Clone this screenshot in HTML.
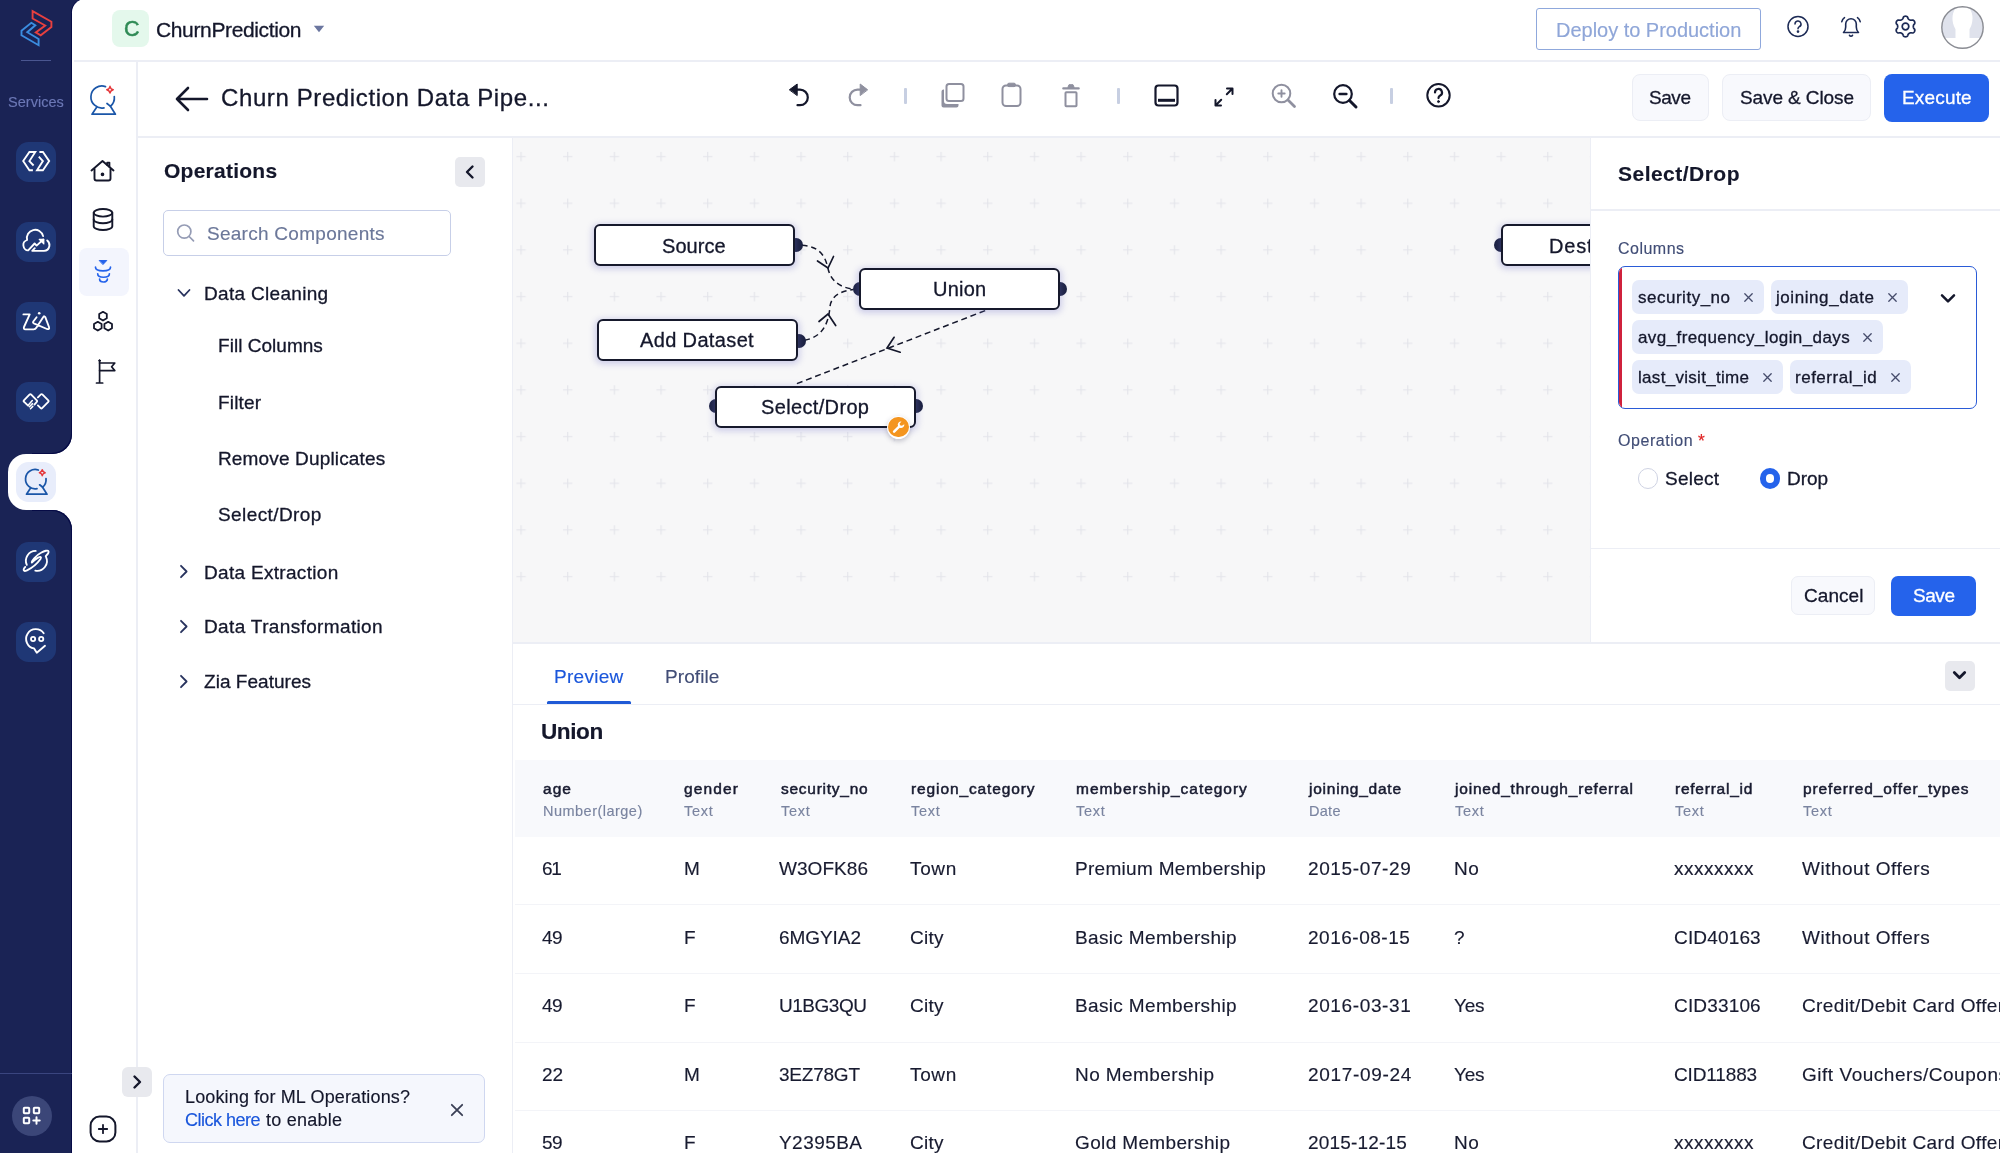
<!DOCTYPE html>
<html lang="en">
<head>
<meta charset="utf-8">
<title>Churn Prediction Data Pipeline</title>
<style>
*{box-sizing:border-box;margin:0;padding:0}
html,body{width:2000px;height:1153px;overflow:hidden;background:#fff}
body{font-family:"Liberation Sans",sans-serif;color:#14172b;position:relative}
#root{position:absolute;left:0;top:0;width:2000px;height:1153px;overflow:hidden}
.abs{position:absolute}
.t{position:absolute;white-space:pre;line-height:1;will-change:transform;-webkit-text-stroke:.15px currentColor}
.m{-webkit-text-stroke:.3px currentColor}
.sb{-webkit-text-stroke:.5px currentColor}
svg{position:absolute;overflow:visible}
#dark{left:0;top:0;width:90px;height:1153px;background:#1a2355}
#main{left:72px;top:-1.300px;width:1928px;height:1155px;background:#fff;border-top-left-radius:13.300px;box-shadow:-1px 0 0 #060b46}
.svc{position:absolute;left:16px;width:40px;height:40px;border-radius:12.5px;background:#1f3775}
.ln{position:absolute;background:#eceef5}
.btn{position:absolute;border-radius:8px;border:1px solid #eceef5;background:#f8f9fd}
.node{position:absolute;height:41.500px;border:2px solid #16192c;border-radius:6px;background:#fff;box-shadow:0 1.5px 6px 1.5px rgba(110,110,200,.3)}
.port{position:absolute;width:14px;height:14px;background:#1b2140;border-radius:7px}
.chip{position:absolute;height:34px;border-radius:7px;background:#e6ebfa}
.sq{position:absolute;width:30px;height:30px;border-radius:5px;background:#e8e9ee}
</style>
</head>
<body>
<div id="root">
<div id="dark" class="abs"></div>
<div id="main" class="abs"></div>

<!-- dark sidebar -->
<svg style="left:0;top:0" width="72" height="60" viewBox="0 0 72 60" fill="none" stroke-width="1.900" stroke-linejoin="miter">
 <path d="M32.600 11.200L51.400 21.700V27L40.700 35.300L35.800 32.400L45.200 25.500L32.600 18.500Z" stroke="#e8403f"/>
 <path d="M31.300 22.800L35.300 25.300L27.300 32.200L38.600 39V45.200L21.500 35.300V30.800Z" stroke="#3b8de0"/>
</svg>
<div class="abs" style="left:21px;top:60px;width:30px;height:1px;background:#4a5690"></div>
<div class="t" style="left:8.0px;top:94.7px;font-size:14.5px;letter-spacing:0.03px;color:#6c78b6;">Services</div>

<div class="abs" style="left:8px;top:454px;width:80px;height:56px;background:#fff;border-radius:18px 0 0 18px"></div>
<div class="abs" style="left:52px;top:434px;width:20px;height:20px;background:#fff"></div>
<div class="abs" style="left:32px;top:413.700px;width:40px;height:40px;background:#1a2355;border-radius:0 0 19.500px 0;box-shadow:inset -1px -1px 0 #060b46"></div>
<div class="abs" style="left:52px;top:510px;width:20px;height:20px;background:#fff"></div>
<div class="abs" style="left:32px;top:510px;width:40px;height:40px;background:#1a2355;border-radius:0 19.500px 0 0;box-shadow:inset -1px 1px 0 #060b46"></div>
<div class="svc" style="top:142px"><svg width="40" height="40" viewBox="0 0 40 40" fill="none" stroke="#fff" stroke-width="1.850" stroke-linejoin="miter">
 <path d="M16.900 28.200H13.400L7.200 19.100L13.400 10H19.300L13.400 19.100L17.600 23.500"/><path d="M22.800 14.700L26.900 19.100L21 28.200H26.900L33.200 19.100L26.900 10H23.400"/></svg></div>
<div class="svc" style="top:222px"><svg width="40" height="40" viewBox="0 0 40 40" fill="none" stroke="#fff" stroke-width="1.850" stroke-linecap="round" stroke-linejoin="round">
 <path d="M27.100 14.100A8.200 8.200 0 0 0 11.100 18C8.500 19 7 21 7.400 23.600C7.800 26.500 9.800 28.600 12.200 28.400L18.600 21.500L20.600 23.600L27.300 17.500"/>
 <path d="M23.200 17.300H27.800V21.900z" fill="#fff" stroke-width="1.200"/>
 <path d="M31.200 18.400C33 19.800 33.800 21.800 33.400 24C32.800 27 30.500 28.800 28 28.800H16.200L18.800 26.200"/></svg></div>
<div class="svc" style="top:302px"><svg width="40" height="40" viewBox="0 0 40 40" fill="none" stroke="#fff" stroke-width="1.850" stroke-linecap="round" stroke-linejoin="round">
 <path d="M7.400 12.400H13.700L8.200 24.500Q7 27.300 9.500 27.300H17.600Q19.500 27.300 20.500 25.500L27.300 15Q28.500 13.500 29.300 15.200L33 25Q33.800 27.800 31 27L17.800 21.300Q16.500 20.600 17.300 19.500L20.600 15.200"/><circle cx="23.200" cy="11.300" r="1.300" fill="#fff" stroke="none"/></svg></div>
<div class="svc" style="top:382px"><svg width="40" height="40" viewBox="0 0 40 40" fill="none" stroke="#fff" stroke-width="1.850" stroke-linecap="round" stroke-linejoin="round">
 <path d="M12.100 23.700L7.900 19.700Q7.200 19.100 7.900 18.400L13.700 12.400Q14.300 11.700 15 12.400L20.800 18.400Q21.500 19.100 20.800 19.800L18.400 22.600"/>
 <path d="M16.300 18.600L12.600 22.700M16.500 21.600L13.400 24.700M16.800 24.400L14.500 26.700" stroke-width="1.500"/>
 <path d="M21.900 15.300L24.900 12.400Q25.600 11.700 26.300 12.400L32.300 18.400Q33 19.100 32.300 19.800L26.100 26.200Q25.400 26.900 24.700 26.200L21.900 23.400"/></svg></div>
<div class="svc" style="top:462px;background:#e8edfb"><svg width="40" height="40" viewBox="0 0 32 36" fill="none" stroke-linecap="round" stroke-linejoin="round" style="left:6.500px;top:4px;width:28px;height:31.500px">
 <path d="M17.500 4.600A11 11 0 1 0 16 25.800" stroke="#1a56a8" stroke-width="2"/>
 <path d="M26.300 14.500c.4 4-1.300 7.600-3.800 9.700M19 21.500l3.600 2.800" stroke="#1a56a8" stroke-width="2"/>
 <path d="M8.500 25.500L4 32.200h23.400l-5-8" stroke="#1a56a8" stroke-width="2"/>
 <path d="M22 4.300c.4 2 1.300 3 3.300 3.400-2 .4-2.900 1.300-3.300 3.400-.4-2.100-1.300-3-3.300-3.400 2-.4 2.900-1.400 3.300-3.400z" stroke="#e5383b" stroke-width="1.700"/></svg></div>
<div class="svc" style="top:542px"><svg width="40" height="40" viewBox="0 0 40 40" fill="none" stroke="#fff" stroke-width="1.850" stroke-linecap="round" stroke-linejoin="round">
 <path d="M19.700 8.900A9.800 9.800 0 0 0 10.800 22.800"/><path d="M30 14.800A9.800 9.800 0 0 1 19.300 28.600"/>
 <path d="M9.300 24.900C6.500 28 7.500 30 11 28.300C16 26 22 20.500 24.500 17C25.800 15 24.300 14.200 22.500 15.400C19.500 17.300 17 19.300 15.800 20.600C15.500 19 20 13.500 25 10.800C28.500 8.800 32 7.800 32.500 9.300C33 10.800 31.500 12.500 29.700 14.100"/>
</svg></div>
<div class="svc" style="top:622px"><svg width="40" height="40" viewBox="0 0 40 40" fill="none" stroke="#fff" stroke-width="1.850" stroke-linecap="round" stroke-linejoin="round">
 <path d="M27.700 11.200A9.700 9.700 0 1 0 18.100 26.400L20.800 30.800L29 23.800"/><circle cx="17.100" cy="17" r="2.100"/><circle cx="25.200" cy="17" r="2.100"/></svg></div>
<div class="abs" style="left:0;top:1073px;width:72px;height:1px;background:#3a457f"></div>
<div class="abs" style="left:12px;top:1096px;width:40px;height:40px;border-radius:20px;background:#3b4678"></div>
<svg style="left:22px;top:1106px" width="20" height="20" viewBox="0 0 20 20" fill="none" stroke="#fff" stroke-width="2" stroke-linejoin="round" stroke-linecap="round">
 <rect x="1.800" y="1.800" width="5.400" height="5.400" rx=".8"/><rect x="11.800" y="1.800" width="5.400" height="5.400" rx=".8"/><rect x="1.800" y="11.800" width="5.400" height="5.400" rx=".8"/><path d="M14.500 11.300v6.400M11.300 14.500h6.400"/></svg>

<!-- structural lines -->
<div class="ln" style="left:74px;top:60px;width:1926px;height:1.5px"></div>
<div class="ln" style="left:136px;top:61px;width:1.5px;height:1092px"></div>
<div class="ln" style="left:137px;top:136px;width:1863px;height:1.5px"></div>
<div class="ln" style="left:511.5px;top:137px;width:1.5px;height:1016px"></div>

<!-- top bar -->
<div class="abs" style="left:112px;top:10px;width:37px;height:37px;border-radius:8px;background:#e4f8ec"></div>
<div class="t sb" style="left:123.5px;top:18.6px;font-size:21.5px;color:#2f8a55;">C</div>
<div class="t m" style="left:156.2px;top:19.0px;font-size:21px;letter-spacing:-0.36px;color:#14172b;">ChurnPrediction</div>
<svg style="left:313px;top:25px" width="12" height="8" viewBox="0 0 12 8"><path d="M0.8 0.8 H11.2 L6 7.2 Z" fill="#6b769f"/></svg>
<div class="abs" style="left:1536px;top:8px;width:225px;height:42px;border:1.5px solid #8fa8dc;border-radius:3px"></div>
<div class="t" style="left:1556.0px;top:19.6px;font-size:20px;letter-spacing:-0.02px;color:#8fa6d8;">Deploy to Production</div>

<!-- help / bell / gear / avatar -->
<svg style="left:1786px;top:15px" width="24" height="24" viewBox="0 0 24 24" fill="none" stroke="#1c2a55" stroke-width="1.5" stroke-linecap="round">
 <circle cx="12" cy="11.5" r="10"/><path d="M9 9a3 3 0 1 1 4.3 2.7c-.9.5-1.3 1-1.3 2"/><circle cx="12" cy="16.6" r=".6" fill="#1c2a55"/>
</svg>
<svg style="left:1839px;top:14px" width="24" height="24" viewBox="0 0 24 24" fill="none" stroke="#1c2a55" stroke-width="1.6" stroke-linecap="round" stroke-linejoin="round">
 <path d="M4.5 18.5h15c-1.6-1.4-2.2-3-2.2-5.5V10a5.3 5.3 0 0 0-10.6 0v3c0 2.500-.6 4.100-2.200 5.500z"/><path d="M10.5 21.300a1.700 1.700 0 0 0 3 0"/><path d="M5.500 3.600c-1.400 1-2.300 2.300-2.700 4"/><path d="M18.500 3.600c1.400 1 2.300 2.300 2.700 4"/>
</svg>
<svg style="left:1892.500px;top:13.900px" width="25" height="25" viewBox="0 0 25 25" fill="none" stroke="#1c2a55" stroke-width="1.700" stroke-linejoin="round"><path d="M20.30 12.50 L20.32 12.84 L20.37 13.19 L20.45 13.55 L20.57 13.92 L20.76 14.33 L21.24 14.84 L21.70 15.40 L21.81 15.89 L21.82 16.36 L21.75 16.81 L21.62 17.25 L21.42 17.65 L21.17 18.02 L20.86 18.35 L20.50 18.64 L20.09 18.87 L19.61 19.02 L18.90 18.90 L18.21 18.73 L17.77 18.78 L17.38 18.86 L17.03 18.97 L16.70 19.10 L16.40 19.25 L16.11 19.44 L15.84 19.66 L15.57 19.91 L15.30 20.20 L15.04 20.56 L14.84 21.24 L14.59 21.92 L14.22 22.25 L13.82 22.50 L13.39 22.67 L12.95 22.77 L12.50 22.80 L12.05 22.77 L11.61 22.67 L11.18 22.50 L10.78 22.25 L10.41 21.92 L10.16 21.24 L9.96 20.56 L9.70 20.20 L9.43 19.91 L9.16 19.66 L8.89 19.44 L8.60 19.25 L8.30 19.10 L7.97 18.97 L7.62 18.86 L7.23 18.78 L6.79 18.73 L6.10 18.90 L5.39 19.02 L4.91 18.87 L4.50 18.64 L4.14 18.35 L3.83 18.02 L3.58 17.65 L3.38 17.25 L3.25 16.81 L3.18 16.36 L3.19 15.89 L3.30 15.40 L3.76 14.84 L4.24 14.33 L4.43 13.92 L4.55 13.55 L4.63 13.19 L4.68 12.84 L4.70 12.50 L4.68 12.16 L4.63 11.81 L4.55 11.45 L4.43 11.08 L4.24 10.67 L3.76 10.16 L3.30 9.60 L3.19 9.11 L3.18 8.64 L3.25 8.19 L3.38 7.75 L3.58 7.35 L3.83 6.98 L4.14 6.65 L4.50 6.36 L4.91 6.13 L5.39 5.98 L6.10 6.10 L6.79 6.27 L7.23 6.22 L7.62 6.14 L7.97 6.03 L8.30 5.90 L8.60 5.75 L8.89 5.56 L9.16 5.34 L9.43 5.09 L9.70 4.80 L9.96 4.44 L10.16 3.76 L10.41 3.08 L10.78 2.75 L11.18 2.50 L11.61 2.33 L12.05 2.23 L12.50 2.20 L12.95 2.23 L13.39 2.33 L13.82 2.50 L14.22 2.75 L14.59 3.08 L14.84 3.76 L15.04 4.44 L15.30 4.80 L15.57 5.09 L15.84 5.34 L16.11 5.56 L16.40 5.75 L16.70 5.90 L17.03 6.03 L17.38 6.14 L17.77 6.22 L18.21 6.27 L18.90 6.10 L19.61 5.98 L20.09 6.13 L20.50 6.36 L20.86 6.65 L21.17 6.98 L21.42 7.35 L21.62 7.75 L21.75 8.19 L21.82 8.64 L21.81 9.11 L21.70 9.60 L21.24 10.16 L20.76 10.67 L20.57 11.08 L20.45 11.45 L20.37 11.81 L20.32 12.16Z"/><circle cx="12.500" cy="12.500" r="3.300"/></svg>
<svg style="left:1941px;top:6px" width="43" height="43" viewBox="0 0 43 43">
 <defs><clipPath id="avc"><circle cx="21.500" cy="21.500" r="20.500"/></clipPath></defs>
 <circle cx="21.500" cy="21.500" r="20.700" fill="#dfe2ec"/>
 <g clip-path="url(#avc)" fill="#fff"><ellipse cx="21.500" cy="12.500" rx="10" ry="14.500"/><rect x="14.500" y="20" width="14" height="15"/><rect x="-2" y="32" width="47" height="14" rx="7"/></g>
 <circle cx="21.500" cy="21.500" r="20.700" fill="none" stroke="#8a8c93" stroke-width="1.400"/>
</svg>

<!-- toolbar: back + title -->
<svg style="left:174px;top:86px" width="36" height="26" viewBox="0 0 36 26" fill="none" stroke="#14172b" stroke-width="2.6" stroke-linecap="round" stroke-linejoin="round">
 <path d="M3 13H33M14 2L3 13l11 11"/>
</svg>
<div class="t m" style="left:220.5px;top:86.2px;font-size:24px;letter-spacing:0.61px;color:#14172b;">Churn Prediction Data Pipe...</div>

<!-- toolbar icons -->
<svg style="left:786px;top:82px" width="26" height="26" viewBox="0 0 26 26" fill="none" stroke="#14172b" stroke-width="2.2" stroke-linecap="round" stroke-linejoin="round">
 <path d="M11 7.600H14A7.800 7.800 0 0 1 14 23.200H11.500"/><path d="M3.600 7.600L11.200 2V13.200z" fill="#14172b" stroke-width="1"/>
</svg>
<svg style="left:846px;top:82px" width="26" height="26" viewBox="0 0 26 26" fill="none" stroke="#8f909f" stroke-width="2.2" stroke-linecap="round" stroke-linejoin="round">
 <path d="M14.500 7.600H11.500A7.800 7.800 0 0 0 11.500 23.200H14.500"/><path d="M21.400 7.600L14.200 2V13.200z" fill="#8f909f" stroke-width="1"/>
</svg>
<div class="abs" style="left:904px;top:88px;width:2.500px;height:15.500px;background:#c7cfe2;border-radius:1px"></div>
<svg style="left:939px;top:82px" width="27" height="27" viewBox="0 0 27 27" fill="none" stroke="#8f909f" stroke-width="2" stroke-linejoin="round">
 <rect x="7.500" y="2" width="17" height="17" rx="2.500"/><path d="M5 7.500V19a3 3 0 0 0 3 3h11.500v1.500a2 2 0 0 1-2 2H4.500a2 2 0 0 1-2-2V9.500a2 2 0 0 1 2-2z" fill="#8f909f" stroke="none"/>
</svg>
<svg style="left:999px;top:81px" width="25" height="27" viewBox="0 0 25 27" fill="none" stroke="#8f909f" stroke-width="2" stroke-linejoin="round">
 <rect x="3.500" y="4.500" width="18" height="20.500" rx="3.500"/><rect x="8.500" y="2.200" width="8" height="3.400" rx="1.500" fill="#8f909f" stroke-width="1"/>
</svg>
<svg style="left:1060px;top:82px" width="22" height="27" viewBox="0 0 22 27" fill="none" stroke="#8f909f" stroke-width="2" stroke-linejoin="round">
 <rect x="5.500" y="10.300" width="11" height="14" rx=".8"/><path d="M3.300 6.400h15.400" stroke-width="2.200" stroke-linecap="round"/><path d="M7.800 5.500l1.200-2.800h4l1.200 2.800z" fill="#8f909f" stroke-width="1"/>
</svg>
<div class="abs" style="left:1117px;top:88px;width:2.500px;height:15.500px;background:#c7cfe2;border-radius:1px"></div>
<svg style="left:1153px;top:83px" width="27" height="25" viewBox="0 0 27 25" fill="none" stroke="#14172b" stroke-width="2.200">
 <rect x="2.500" y="2.500" width="22" height="20" rx="3"/><path d="M5 17.300h17" stroke-width="3"/>
</svg>
<svg style="left:1213px;top:86px" width="22" height="22" viewBox="0 0 22 22" fill="none" stroke="#14172b" stroke-width="2" stroke-linecap="round" stroke-linejoin="round">
 <path d="M13.800 8.200L19.500 2.500M14 2.500h5.500V8M8.200 13.800L2.500 19.500M8 19.500H2.500V14"/>
</svg>
<svg style="left:1270px;top:82px" width="28" height="28" viewBox="0 0 28 28" fill="none" stroke="#8f909f" stroke-width="2" stroke-linecap="round">
 <circle cx="11.500" cy="11.500" r="8.800"/><path d="M18 18l6.500 6.500" stroke-width="2.800"/><path d="M11.500 8.300v6.400M8.300 11.500h6.400" stroke-width="1.900"/>
</svg>
<svg style="left:1331px;top:82px" width="28" height="28" viewBox="0 0 28 28" fill="none" stroke="#14172b" stroke-width="2.200" stroke-linecap="round">
 <circle cx="12" cy="12" r="8.800"/><path d="M18.500 18.500l6.500 6.500" stroke-width="3"/><path d="M8.600 12h6.800" stroke-width="2.400"/>
</svg>
<div class="abs" style="left:1390px;top:88px;width:2.500px;height:15.500px;background:#c7cfe2;border-radius:1px"></div>
<svg style="left:1425px;top:82px" width="27" height="27" viewBox="0 0 27 27" fill="none" stroke="#14172b" stroke-width="2" stroke-linecap="round">
 <circle cx="13.500" cy="13.300" r="11.200"/><path d="M10 10.500a3.500 3.500 0 1 1 5.200 3c-1.100.6-1.700 1.300-1.700 2.600" stroke-width="2.200"/><circle cx="13.500" cy="19.600" r="1" fill="#14172b" stroke-width="1"/>
</svg>

<!-- toolbar buttons -->
<div class="btn" style="left:1632px;top:74px;width:77px;height:47px"></div>
<div class="btn" style="left:1722px;top:74px;width:149px;height:47px"></div>
<div class="abs" style="left:1884px;top:74px;width:105px;height:48px;border-radius:8px;background:#2563eb"></div>
<div class="t m" style="left:1649.1px;top:88.3px;font-size:19px;letter-spacing:-0.44px;">Save</div>
<div class="t m" style="left:1739.6px;top:88.3px;font-size:19px;letter-spacing:-0.10px;">Save &amp; Close</div>
<div class="t m" style="left:1902.0px;top:88.3px;font-size:19px;letter-spacing:0.17px;color:#fff;">Execute</div>

<!-- secondary sidebar icons -->
<svg style="left:88px;top:82px" width="32" height="36" viewBox="0 0 32 36" fill="none" stroke-linecap="round" stroke-linejoin="round">
 <path d="M17.500 4.600A11 11 0 1 0 16 25.800" stroke="#1a56a8" stroke-width="1.700"/>
 <path d="M26.300 14.500c.4 4-1.300 7.600-3.800 9.700M19 21.500l3.600 2.800" stroke="#1a56a8" stroke-width="1.700"/>
 <path d="M8.500 25.500L4 32.200h23.400l-5-8" stroke="#1a56a8" stroke-width="1.700"/>
 <path d="M22 4.300c.4 2 1.300 3 3.300 3.400-2 .4-2.900 1.300-3.300 3.400-.4-2.100-1.300-3-3.300-3.400 2-.4 2.900-1.400 3.300-3.400z" stroke="#e5383b" stroke-width="1.400"/>
</svg>
<svg style="left:89px;top:158px" width="28" height="26" viewBox="0 0 28 26" fill="none" stroke="#14172b" stroke-width="1.900" stroke-linecap="round" stroke-linejoin="round">
 <path d="M2.500 12.500L13.500 3l11 9.500"/><path d="M18.200 6.900V4.600h2.200V8.700"/><path d="M5.500 11v9.500a2 2 0 0 0 2 2h12a2 2 0 0 0 2-2V11"/><circle cx="13.500" cy="16.300" r=".9" fill="#14172b"/>
</svg>
<svg style="left:91px;top:207px" width="24" height="26" viewBox="0 0 24 26" fill="none" stroke="#14172b" stroke-width="1.900" stroke-linecap="round">
 <ellipse cx="12" cy="5.800" rx="9.300" ry="3.800"/><path d="M2.700 5.800v13.400c0 2.100 4.200 3.800 9.300 3.800s9.300-1.700 9.300-3.800V5.800"/><path d="M2.700 12.500c0 2.100 4.200 3.800 9.300 3.800s9.300-1.700 9.300-3.800"/>
</svg>
<div class="abs" style="left:79px;top:248px;width:50px;height:48px;border-radius:8px;background:#f3f5fd"></div>
<svg style="left:93px;top:258px" width="20" height="26" viewBox="0 0 20 26" fill="none" stroke="#2563eb" stroke-width="1.700" stroke-linecap="round">
 <path d="M6.600 2.500h7.200L10.200 6.300z" fill="#2563eb" stroke-linejoin="round" stroke-width="1"/>
 <path d="M2.500 9.200C2.500 14 17.500 14 17.500 9.200"/><path d="M4.700 15.800C4.700 20.400 16.400 20.400 16.400 15.800"/><path d="M6.600 21C6.600 25 14.400 25 14.400 21"/>
</svg>
<svg style="left:91px;top:309px" width="24" height="24" viewBox="0 0 24 24" fill="none" stroke="#14172b" stroke-width="1.800" stroke-linejoin="round">
 <path d="M12 2.800l3.800 2.200v4.300L12 11.500 8.200 9.300V5z"/><path d="M6.800 12.800l3.800 2.200v4.300l-3.800 2.200L3 19.300V15z"/><path d="M17.200 12.800L21 15v4.300l-3.800 2.200-3.800-2.200V15z"/>
</svg>
<svg style="left:94px;top:358px" width="24" height="28" viewBox="0 0 24 28" fill="none" stroke="#14172b" stroke-width="1.700" stroke-linecap="round" stroke-linejoin="round">
 <path d="M5.600 2.500v22.500M2.500 25h6.200"/><path d="M5.600 5h15.200l-3.200 3.800 3.200 3.800H5.600"/><circle cx="5.600" cy="2.600" r=".9" fill="#14172b" stroke-width="1"/>
</svg>

<!-- operations panel -->
<div class="sq" style="left:455px;top:157px"></div>
<svg style="left:464px;top:164px" width="12" height="16" viewBox="0 0 12 16" fill="none" stroke="#14172b" stroke-width="2.400" stroke-linecap="round" stroke-linejoin="round"><path d="M8.500 2.500L3 8l5.500 5.500"/></svg>
<div class="abs" style="left:163px;top:210px;width:288px;height:46px;border:1px solid #c7cfe8;border-radius:5px"></div>
<svg style="left:175px;top:222px" width="22" height="22" viewBox="0 0 22 22" fill="none" stroke="#959cb5" stroke-width="1.700" stroke-linecap="round"><circle cx="9.300" cy="9.600" r="6.600"/><path d="M14.200 14.500l4.300 4.300"/></svg>
<svg style="left:177px;top:288px" width="14" height="10" viewBox="0 0 14 10" fill="none" stroke="#28335e" stroke-width="1.800" stroke-linecap="round" stroke-linejoin="round"><path d="M1.500 2l5.500 5.800L12.500 2"/></svg>
<div class="t" style="left:163.5px;top:160.1px;font-size:21px;letter-spacing:0.25px;font-weight:bold;">Operations</div>
<div class="t" style="left:207.4px;top:223.6px;font-size:19px;letter-spacing:0.27px;color:#6b7799;">Search Components</div>
<div class="t m" style="left:203.8px;top:284.1px;font-size:19px;letter-spacing:0.31px;">Data Cleaning</div>
<div class="t m" style="left:218.2px;top:336.3px;font-size:19px;letter-spacing:0.03px;">Fill Columns</div>
<div class="t m" style="left:217.8px;top:392.5px;font-size:19px;letter-spacing:0.15px;">Filter</div>
<div class="t m" style="left:217.8px;top:448.5px;font-size:19px;letter-spacing:0.15px;">Remove Duplicates</div>
<div class="t m" style="left:217.8px;top:504.5px;font-size:19px;letter-spacing:0.41px;">Select/Drop</div>
<svg style="left:179px;top:564.0px" width="10" height="15" viewBox="0 0 10 15" fill="none" stroke="#28335e" stroke-width="1.800" stroke-linecap="round" stroke-linejoin="round"><path d="M2 1.800l5.600 5.700L2 13.200"/></svg>
<svg style="left:179px;top:618.5px" width="10" height="15" viewBox="0 0 10 15" fill="none" stroke="#28335e" stroke-width="1.800" stroke-linecap="round" stroke-linejoin="round"><path d="M2 1.800l5.600 5.700L2 13.200"/></svg>
<svg style="left:179px;top:673.5px" width="10" height="15" viewBox="0 0 10 15" fill="none" stroke="#28335e" stroke-width="1.800" stroke-linecap="round" stroke-linejoin="round"><path d="M2 1.800l5.600 5.700L2 13.200"/></svg>
<div class="t m" style="left:204.0px;top:562.6px;font-size:19px;letter-spacing:0.31px;">Data Extraction</div>
<div class="t m" style="left:204.0px;top:617.3px;font-size:19px;letter-spacing:0.36px;">Data Transformation</div>
<div class="t m" style="left:204.0px;top:672.1px;font-size:19px;letter-spacing:0.04px;">Zia Features</div>

<!-- ML ops banner -->
<div class="sq" style="left:121.500px;top:1066.500px;border-radius:6px"></div>
<svg style="left:131px;top:1074px" width="12" height="16" viewBox="0 0 12 16" fill="none" stroke="#14172b" stroke-width="2.400" stroke-linecap="round" stroke-linejoin="round"><path d="M3.500 2.500L9 8l-5.500 5.500"/></svg>
<svg style="left:88px;top:1114px" width="30" height="30" viewBox="0 0 30 30" fill="none" stroke="#14172b" stroke-width="2" stroke-linecap="round"><rect x="2.600" y="2.600" width="24.800" height="24.800" rx="9"/><path d="M15 10.800v8.400M10.800 15h8.400" stroke-width="1.800"/></svg>
<div class="abs" style="left:163px;top:1074px;width:322px;height:69px;border:1px solid #cfd7f0;border-radius:7px;background:#f5f7fd"></div>
<svg style="left:450px;top:1103px" width="14" height="14" viewBox="0 0 14 14" fill="none" stroke="#3a3f55" stroke-width="1.800" stroke-linecap="round"><path d="M1.800 1.800l10.400 10.400M12.200 1.800L1.800 12.200"/></svg>
<div class="t" style="left:184.6px;top:1087.5px;font-size:18px;letter-spacing:0.14px;">Looking for ML Operations?</div>
<div class="t" style="left:184.6px;top:1110.9px;font-size:18px;letter-spacing:-0.51px;color:#1a56db;">Click here</div>
<div class="t" style="left:266.0px;top:1110.9px;font-size:18px;letter-spacing:0.24px;">to enable</div>

<!-- canvas -->
<div class="abs" style="left:513px;top:137.500px;width:1077px;height:504px;background:#f7f7f8;overflow:hidden">
<svg style="left:0;top:0" width="1077" height="504">
 <defs><pattern id="gp" x="3.400" y="13.900" width="46.670" height="46.670" patternUnits="userSpaceOnUse"><path d="M0 4.700h9.400M4.700 0v9.400" stroke="#e3e4ea" stroke-width="1.100" fill="none"/></pattern></defs>
 <rect width="1077" height="450" fill="url(#gp)"/>
 <g fill="none" stroke="#14172b" stroke-width="1.500" transform="translate(-513,-137.500)">
  <path d="M802 244.800C821 246 825.500 257 828 268C830.500 279.500 839 287 853.500 288.600" stroke-dasharray="5.500 3.800"/>
  <path d="M804.500 339.800C822 336.500 828.500 324 830 306C831 296 840 290.500 853.500 289" stroke-dasharray="5.500 3.800"/>
  <path d="M985.200 310.100L793.400 384.500" stroke-dasharray="6 3.800"/>
  <path d="M817.500 260.500L828 267.500L833.500 256" stroke-width="1.700" stroke-linecap="round"/>
  <path d="M819 321L828 313.500L835.700 325" stroke-width="1.700" stroke-linecap="round"/>
  <path d="M894.100 336.800L887 347.500L900.200 351.700" stroke-width="1.700" stroke-linecap="round"/>
 </g>
</svg>
<div class="port" style="left:276px;top:100.500px"></div>
<div class="port" style="left:279px;top:196px"></div>
<div class="port" style="left:340px;top:144.500px"></div>
<div class="port" style="left:540px;top:144.500px"></div>
<div class="port" style="left:196px;top:261.500px"></div>
<div class="port" style="left:396px;top:261.500px"></div>
<div class="port" style="left:980.500px;top:100.500px"></div>
<div class="node" style="left:81px;top:86.500px;width:201px"></div>
<div class="node" style="left:84px;top:181.500px;width:201px"></div>
<div class="node" style="left:346px;top:130.500px;width:201px"></div>
<div class="node" style="left:202px;top:248.500px;width:201px"></div>
<div class="node" style="left:988px;top:86.500px;width:201px"></div>
<div class="abs" style="left:374px;top:278px;width:23px;height:23px;border-radius:50%;background:#fff;box-shadow:0 2px 5px rgba(60,60,90,.3)"></div>
<div class="abs" style="left:375.200px;top:279.200px;width:20.600px;height:20.600px;border-radius:50%;background:#f4951f"></div>
<svg style="left:379px;top:283px" width="13" height="13" viewBox="0 0 13 13" fill="#fff"><path d="M12.300 3.200a3.300 3.300 0 0 1-4.600 3.500L3 11.500a1.250 1.250 0 0 1-1.800-1.800L6 5A3.300 3.300 0 0 1 9.500.500L7.600 2.400l.4 1.900 1.900.4z"/></svg>
<div class="t m" style="left:149.4px;top:98.2px;font-size:20px;letter-spacing:0.05px;">Source</div>
<div class="t m" style="left:126.9px;top:192.8px;font-size:20px;letter-spacing:0.36px;">Add Dataset</div>
<div class="t m" style="left:420.0px;top:141.9px;font-size:20px;letter-spacing:0.21px;">Union</div>
<div class="t m" style="left:248.4px;top:259.4px;font-size:20px;letter-spacing:0.35px;">Select/Drop</div>
<div class="t m" style="left:1036.3px;top:98.2px;font-size:20px;letter-spacing:0.79px;">Destination</div>
</div>
<div class="ln" style="left:1589.500px;top:137px;width:1.500px;height:505px"></div>
<div class="ln" style="left:513px;top:642px;width:1487px;height:1.700px"></div>

<!-- right panel -->
<div class="abs" style="left:1591px;top:137.500px;width:409px;height:504px;background:#fff"></div>
<div class="ln" style="left:1591px;top:209px;width:409px;height:1.500px"></div>
<div class="ln" style="left:1591px;top:547.500px;width:409px;height:1.500px"></div>
<div class="abs" style="left:1617.500px;top:265.500px;width:359.500px;height:143px;border:1.500px solid #2a5bd7;border-radius:7px;overflow:hidden"><div class="abs" style="left:0;top:0;width:3.200px;height:143px;background:#d0213c"></div></div>
<div class="chip" style="left:1632px;top:280px;width:132px"></div>
<div class="chip" style="left:1771px;top:280px;width:136.500px"></div>
<div class="chip" style="left:1632px;top:320px;width:250.500px"></div>
<div class="chip" style="left:1632px;top:360px;width:150.500px"></div>
<div class="chip" style="left:1789.500px;top:360px;width:121px"></div>
<svg style="left:1744.2px;top:293.2px" width="9" height="9" viewBox="0 0 9 9" fill="none" stroke="#454b6b" stroke-width="1.300" stroke-linecap="round"><path d="M.8.800l7.400 7.400M8.200.800L.8 8.200"/></svg>
<svg style="left:1888px;top:293.2px" width="9" height="9" viewBox="0 0 9 9" fill="none" stroke="#454b6b" stroke-width="1.300" stroke-linecap="round"><path d="M.8.800l7.400 7.400M8.200.800L.8 8.200"/></svg>
<svg style="left:1863.2px;top:333.2px" width="9" height="9" viewBox="0 0 9 9" fill="none" stroke="#454b6b" stroke-width="1.300" stroke-linecap="round"><path d="M.8.800l7.400 7.400M8.200.800L.8 8.200"/></svg>
<svg style="left:1763.2px;top:373.2px" width="9" height="9" viewBox="0 0 9 9" fill="none" stroke="#454b6b" stroke-width="1.300" stroke-linecap="round"><path d="M.8.800l7.400 7.400M8.200.800L.8 8.200"/></svg>
<svg style="left:1891.2px;top:373.2px" width="9" height="9" viewBox="0 0 9 9" fill="none" stroke="#454b6b" stroke-width="1.300" stroke-linecap="round"><path d="M.8.800l7.400 7.400M8.200.800L.8 8.200"/></svg>
<svg style="left:1940px;top:293px" width="16" height="11" viewBox="0 0 16 11" fill="none" stroke="#14172b" stroke-width="2.500" stroke-linecap="round" stroke-linejoin="round"><path d="M2 2.300l6 6 6-6"/></svg>
<div class="t" style="left:1618.0px;top:162.8px;font-size:21px;letter-spacing:0.48px;font-weight:bold;">Select/Drop</div>
<div class="t" style="left:1618.0px;top:241.1px;font-size:16px;letter-spacing:0.48px;color:#414d76;">Columns</div>
<div class="t m" style="left:1638.0px;top:289.0px;font-size:17px;letter-spacing:0.51px;">security_no</div>
<div class="t m" style="left:1775.6px;top:289.0px;font-size:17px;letter-spacing:0.57px;">joining_date</div>
<div class="t m" style="left:1638.0px;top:329.0px;font-size:17px;letter-spacing:0.41px;">avg_frequency_login_days</div>
<div class="t m" style="left:1638.0px;top:368.8px;font-size:17px;letter-spacing:0.30px;">last_visit_time</div>
<div class="t m" style="left:1795.4px;top:368.8px;font-size:17px;letter-spacing:0.51px;">referral_id</div>
<div class="t" style="left:1618.0px;top:432.9px;font-size:16px;letter-spacing:0.55px;color:#414d76;">Operation</div>
<div class="t" style="left:1698.0px;top:433.2px;font-size:17.5px;color:#e02424;">*</div>
<div class="abs" style="left:1637.500px;top:468.200px;width:20.500px;height:20.500px;border-radius:50%;border:1.200px solid #cfd3e3;background:#fff"></div>
<div class="abs" style="left:1759.500px;top:468.200px;width:20.500px;height:20.500px;border-radius:50%;background:#2563eb"></div>
<div class="abs" style="left:1765.700px;top:474.400px;width:8.200px;height:8.200px;border-radius:50%;background:#fff"></div>
<div class="t m" style="left:1664.5px;top:469.3px;font-size:19px;letter-spacing:0.26px;">Select</div>
<div class="t m" style="left:1786.5px;top:469.3px;font-size:19px;letter-spacing:-0.03px;">Drop</div>
<div class="btn" style="left:1791px;top:576px;width:84px;height:39px;border-radius:7px"></div>
<div class="abs" style="left:1891px;top:576px;width:85px;height:39.500px;border-radius:7px;background:#2563eb"></div>
<div class="t m" style="left:1803.5px;top:586.4px;font-size:19px;letter-spacing:0.05px;">Cancel</div>
<div class="t m" style="left:1912.5px;top:586.4px;font-size:19px;letter-spacing:-0.44px;color:#fff;">Save</div>

<!-- bottom panel -->
<div class="abs" style="left:546.500px;top:700.800px;width:84px;height:3px;background:#1f5ad6;border-radius:1.500px 1.500px 0 0"></div>
<div class="ln" style="left:513px;top:703.800px;width:1487px;height:1.500px"></div>
<div class="sq" style="left:1944.500px;top:660.500px"></div>
<svg style="left:1952px;top:670px" width="15" height="11" viewBox="0 0 15 11" fill="none" stroke="#14172b" stroke-width="2.800" stroke-linecap="round" stroke-linejoin="round"><path d="M2.300 2.600l5.200 5.200 5.200-5.200"/></svg>
<div class="abs" style="left:515px;top:759.500px;width:1485px;height:77px;background:#f8f9fc"></div>
<div class="t" style="left:554.0px;top:666.7px;font-size:19px;letter-spacing:0.29px;color:#1a56db;">Preview</div>
<div class="t" style="left:665.3px;top:666.7px;font-size:19px;letter-spacing:0.09px;color:#414d76;">Profile</div>
<div class="t" style="left:540.8px;top:721.4px;font-size:22.6px;letter-spacing:-0.45px;font-weight:bold;">Union</div>
<div class="t sb" style="left:542.9px;top:780.5px;font-size:15.5px;letter-spacing:1.06px;color:#181b30;">age</div>
<div class="t" style="left:542.9px;top:804.3px;font-size:14.5px;letter-spacing:0.48px;color:#7a84a0;">Number(large)</div>
<div class="t sb" style="left:684.4px;top:780.5px;font-size:15.5px;letter-spacing:1.11px;color:#181b30;">gender</div>
<div class="t" style="left:684.4px;top:804.3px;font-size:14.5px;letter-spacing:0.74px;color:#7a84a0;">Text</div>
<div class="t sb" style="left:780.5px;top:780.5px;font-size:15.5px;letter-spacing:0.74px;color:#181b30;">security_no</div>
<div class="t" style="left:780.5px;top:804.3px;font-size:14.5px;letter-spacing:0.74px;color:#7a84a0;">Text</div>
<div class="t sb" style="left:910.8px;top:780.5px;font-size:15.5px;letter-spacing:0.89px;color:#181b30;">region_category</div>
<div class="t" style="left:910.8px;top:804.3px;font-size:14.5px;letter-spacing:0.74px;color:#7a84a0;">Text</div>
<div class="t sb" style="left:1076.3px;top:780.5px;font-size:15.5px;letter-spacing:0.97px;color:#181b30;">membership_category</div>
<div class="t" style="left:1076.3px;top:804.3px;font-size:14.5px;letter-spacing:0.74px;color:#7a84a0;">Text</div>
<div class="t sb" style="left:1308.7px;top:780.5px;font-size:15.5px;letter-spacing:0.77px;color:#181b30;">joining_date</div>
<div class="t" style="left:1308.7px;top:804.3px;font-size:14.5px;letter-spacing:0.29px;color:#7a84a0;">Date</div>
<div class="t sb" style="left:1455.1px;top:780.5px;font-size:15.5px;letter-spacing:0.80px;color:#181b30;">joined_through_referral</div>
<div class="t" style="left:1455.1px;top:804.3px;font-size:14.5px;letter-spacing:0.74px;color:#7a84a0;">Text</div>
<div class="t sb" style="left:1674.8px;top:780.5px;font-size:15.5px;letter-spacing:0.76px;color:#181b30;">referral_id</div>
<div class="t" style="left:1674.8px;top:804.3px;font-size:14.5px;letter-spacing:0.74px;color:#7a84a0;">Text</div>
<div class="t sb" style="left:1802.5px;top:780.5px;font-size:15.5px;letter-spacing:0.88px;color:#181b30;">preferred_offer_types</div>
<div class="t" style="left:1802.5px;top:804.3px;font-size:14.5px;letter-spacing:0.74px;color:#7a84a0;">Text</div>
<div class="t" style="left:542.0px;top:858.8px;font-size:19px;letter-spacing:-1.20px;color:#181b30;">61</div>
<div class="t" style="left:683.5px;top:858.8px;font-size:19px;letter-spacing:-0.33px;color:#181b30;">M</div>
<div class="t" style="left:779.1px;top:858.8px;font-size:19px;letter-spacing:0.05px;color:#181b30;">W3OFK86</div>
<div class="t" style="left:909.9px;top:858.8px;font-size:19px;letter-spacing:0.65px;color:#181b30;">Town</div>
<div class="t" style="left:1075.4px;top:858.8px;font-size:19px;letter-spacing:0.30px;color:#181b30;">Premium Membership</div>
<div class="t" style="left:1307.8px;top:858.8px;font-size:19px;letter-spacing:0.62px;color:#181b30;">2015-07-29</div>
<div class="t" style="left:1453.7px;top:858.8px;font-size:19px;letter-spacing:0.60px;color:#181b30;">No</div>
<div class="t" style="left:1673.5px;top:858.8px;font-size:19px;letter-spacing:0.51px;color:#181b30;">xxxxxxxx</div>
<div class="t" style="left:1801.6px;top:858.8px;font-size:19px;letter-spacing:0.51px;color:#181b30;">Without Offers</div>
<div class="t" style="left:542.0px;top:927.5px;font-size:19px;letter-spacing:-0.64px;color:#181b30;">49</div>
<div class="t" style="left:683.5px;top:927.5px;font-size:19px;letter-spacing:-1.11px;color:#181b30;">F</div>
<div class="t" style="left:779.1px;top:927.5px;font-size:19px;letter-spacing:-0.06px;color:#181b30;">6MGYIA2</div>
<div class="t" style="left:909.9px;top:927.5px;font-size:19px;letter-spacing:0.26px;color:#181b30;">City</div>
<div class="t" style="left:1075.4px;top:927.5px;font-size:19px;letter-spacing:0.35px;color:#181b30;">Basic Membership</div>
<div class="t" style="left:1307.8px;top:927.5px;font-size:19px;letter-spacing:0.51px;color:#181b30;">2016-08-15</div>
<div class="t" style="left:1453.7px;top:927.5px;font-size:19px;letter-spacing:-1.20px;color:#181b30;">?</div>
<div class="t" style="left:1673.5px;top:927.5px;font-size:19px;letter-spacing:0.16px;color:#181b30;">CID40163</div>
<div class="t" style="left:1801.6px;top:927.5px;font-size:19px;letter-spacing:0.51px;color:#181b30;">Without Offers</div>
<div class="t" style="left:542.0px;top:996.1px;font-size:19px;letter-spacing:-0.64px;color:#181b30;">49</div>
<div class="t" style="left:683.5px;top:996.1px;font-size:19px;letter-spacing:-1.11px;color:#181b30;">F</div>
<div class="t" style="left:779.1px;top:996.1px;font-size:19px;letter-spacing:-0.47px;color:#181b30;">U1BG3QU</div>
<div class="t" style="left:909.9px;top:996.1px;font-size:19px;letter-spacing:0.26px;color:#181b30;">City</div>
<div class="t" style="left:1075.4px;top:996.1px;font-size:19px;letter-spacing:0.35px;color:#181b30;">Basic Membership</div>
<div class="t" style="left:1307.8px;top:996.1px;font-size:19px;letter-spacing:0.62px;color:#181b30;">2016-03-31</div>
<div class="t" style="left:1453.7px;top:996.1px;font-size:19px;letter-spacing:-0.25px;color:#181b30;">Yes</div>
<div class="t" style="left:1673.5px;top:996.1px;font-size:19px;letter-spacing:0.16px;color:#181b30;">CID33106</div>
<div class="t" style="left:1801.6px;top:996.1px;font-size:19px;letter-spacing:0.37px;color:#181b30;">Credit/Debit Card Offers</div>
<div class="t" style="left:542.0px;top:1064.7px;font-size:19px;letter-spacing:-0.14px;color:#181b30;">22</div>
<div class="t" style="left:683.5px;top:1064.7px;font-size:19px;letter-spacing:-0.33px;color:#181b30;">M</div>
<div class="t" style="left:779.1px;top:1064.7px;font-size:19px;letter-spacing:-0.23px;color:#181b30;">3EZ78GT</div>
<div class="t" style="left:909.9px;top:1064.7px;font-size:19px;letter-spacing:0.65px;color:#181b30;">Town</div>
<div class="t" style="left:1075.4px;top:1064.7px;font-size:19px;letter-spacing:0.41px;color:#181b30;">No Membership</div>
<div class="t" style="left:1307.8px;top:1064.7px;font-size:19px;letter-spacing:0.68px;color:#181b30;">2017-09-24</div>
<div class="t" style="left:1453.7px;top:1064.7px;font-size:19px;letter-spacing:-0.25px;color:#181b30;">Yes</div>
<div class="t" style="left:1673.5px;top:1064.7px;font-size:19px;letter-spacing:-0.14px;color:#181b30;">CID11883</div>
<div class="t" style="left:1801.6px;top:1064.7px;font-size:19px;letter-spacing:0.53px;color:#181b30;">Gift Vouchers/Coupons</div>
<div class="t" style="left:542.0px;top:1133.4px;font-size:19px;letter-spacing:-0.64px;color:#181b30;">59</div>
<div class="t" style="left:683.5px;top:1133.4px;font-size:19px;letter-spacing:-1.11px;color:#181b30;">F</div>
<div class="t" style="left:779.1px;top:1133.4px;font-size:19px;letter-spacing:0.45px;color:#181b30;">Y2395BA</div>
<div class="t" style="left:909.9px;top:1133.4px;font-size:19px;letter-spacing:0.26px;color:#181b30;">City</div>
<div class="t" style="left:1075.4px;top:1133.4px;font-size:19px;letter-spacing:0.36px;color:#181b30;">Gold Membership</div>
<div class="t" style="left:1307.8px;top:1133.4px;font-size:19px;letter-spacing:0.18px;color:#181b30;">2015-12-15</div>
<div class="t" style="left:1453.7px;top:1133.4px;font-size:19px;letter-spacing:0.60px;color:#181b30;">No</div>
<div class="t" style="left:1673.5px;top:1133.4px;font-size:19px;letter-spacing:0.51px;color:#181b30;">xxxxxxxx</div>
<div class="t" style="left:1801.6px;top:1133.4px;font-size:19px;letter-spacing:0.37px;color:#181b30;">Credit/Debit Card Offers</div>
<div class="abs" style="left:515px;top:904.2px;width:1485px;height:1.2px;background:#f3f4f8"></div>
<div class="abs" style="left:515px;top:972.9px;width:1485px;height:1.2px;background:#f3f4f8"></div>
<div class="abs" style="left:515px;top:1041.6px;width:1485px;height:1.2px;background:#f3f4f8"></div>
<div class="abs" style="left:515px;top:1110.3px;width:1485px;height:1.2px;background:#f3f4f8"></div>
</div>
</body>
</html>
